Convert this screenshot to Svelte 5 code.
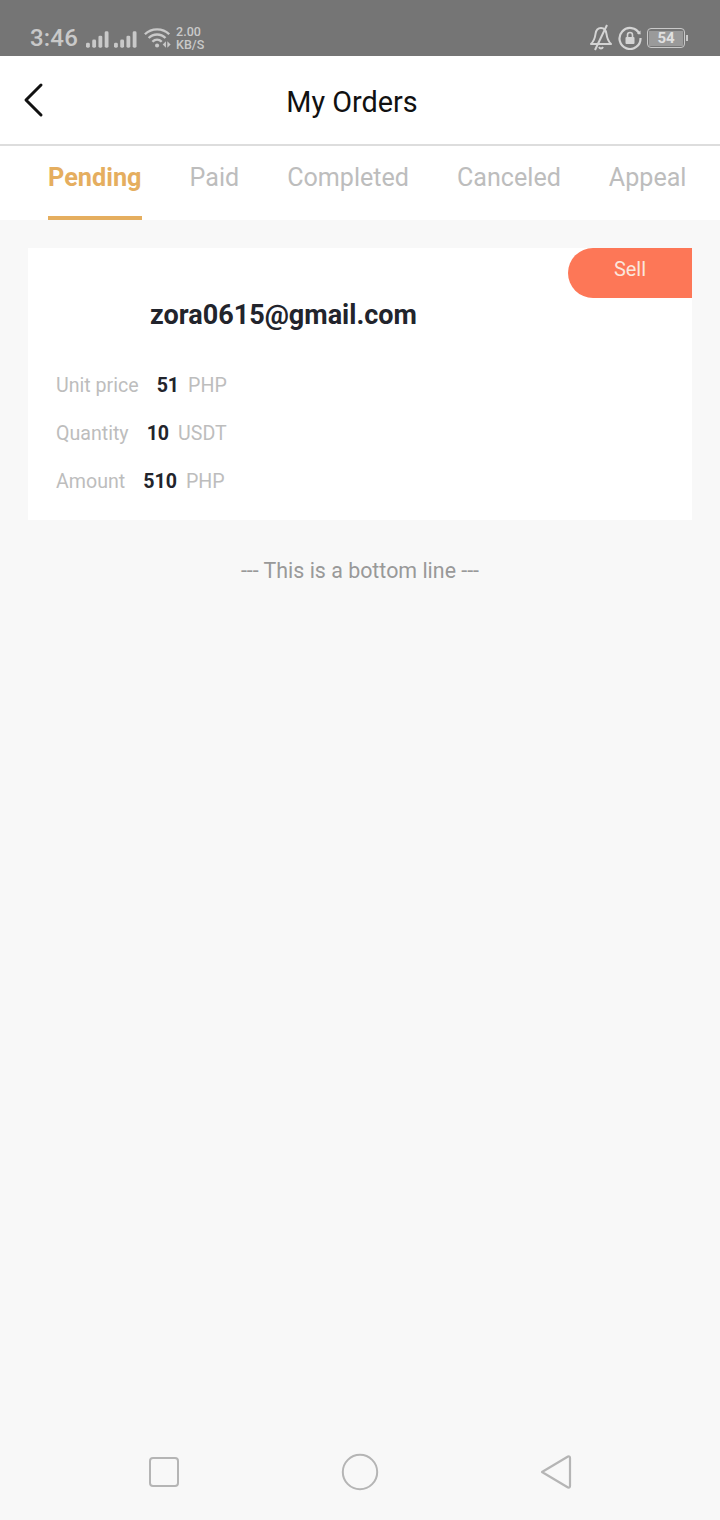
<script>
  const tabs = ['Pending', 'Paid', 'Completed', 'Canceled', 'Appeal'];
  let active = $state('Pending');

  const rows = [
    { label: 'Unit price', value: '51', unit: 'PHP' },
    { label: 'Quantity', value: '10', unit: 'USDT' },
    { label: 'Amount', value: '510', unit: 'PHP' }
  ];
</script>

<div class="page">
  <div class="status">
    <div class="status-left">
      <span class="time">3:46</span>
      <svg class="signal" width="23" height="18" viewBox="0 0 24 18" fill="#c9c9c9">
        <rect x="0" y="13" width="4" height="5" rx="1.5" />
        <rect x="6.5" y="9.5" width="4" height="8.5" rx="1.5" />
        <rect x="13" y="5.5" width="4" height="12.5" rx="1.5" />
        <rect x="19.5" y="1" width="4" height="17" rx="1.5" />
      </svg>
      <svg class="signal" width="23" height="18" viewBox="0 0 24 18" fill="#c9c9c9">
        <rect x="0" y="13" width="4" height="5" rx="1.5" />
        <rect x="6.5" y="9.5" width="4" height="8.5" rx="1.5" />
        <rect x="13" y="5.5" width="4" height="12.5" rx="1.5" />
        <rect x="19.5" y="1" width="4" height="17" rx="1.5" />
      </svg>
      <svg class="wifi" width="28" height="24" viewBox="0 0 30 24" fill="none" stroke="#c9c9c9" stroke-width="2.6">
        <path d="M1 8 C8 1 20 1 27 8" />
        <path d="M5 12 C10 7 18 7 23 12" />
        <path d="M9 16 C12 13 16 13 19 16" />
        <circle cx="14" cy="20" r="2.2" fill="#c9c9c9" stroke="none" />
        <path d="M20 19 L23.5 15.5 V22.5 Z" fill="#c9c9c9" stroke="none" />
        <path d="M25 15.5 L28.5 19 L25 22.5 Z" fill="#c9c9c9" stroke="none" />
      </svg>
      <div class="speed"><span>2.00</span><span>KB/S</span></div>
    </div>
    <div class="status-right">
      <svg width="24" height="28" viewBox="0 0 24 28" fill="none" stroke="#d4d4d4" stroke-width="2" stroke-linejoin="round">
        <path d="M2 20 C5 17 6 14 6.5 10 C7 6 9 4 12 4 C15 4 17 6 17.5 10 C18 14 19 17 22 20 Z" />
        <path d="M10 23 C11 25 13 25 14 23" />
        <path d="M18 1 L6 26" />
      </svg>
      <svg width="24" height="24" viewBox="0 0 24 24" fill="none" stroke="#d4d4d4" stroke-width="2.2">
        <path d="M21.5 8 A10.5 10.5 0 1 0 22.5 12" />
        <path d="M19 7.5 L22.5 8.5 L22.5 4.5 Z" fill="#d4d4d4" stroke="none" />
        <rect x="7.5" y="11" width="9" height="7" rx="1" fill="#d4d4d4" stroke="none" />
        <path d="M9.5 11 V9 A2.5 2.5 0 0 1 14.5 9 V11" stroke-width="1.6" />
      </svg>
      <div class="battery"><span class="level">54</span></div>
      <span class="nub"></span>
    </div>
  </div>

  <header class="head">
    <button class="back" type="button" aria-label="Back">
      <svg width="22" height="36" viewBox="0 0 22 36" fill="none" stroke="#111" stroke-width="3" stroke-linecap="round" stroke-linejoin="round">
        <path d="M19 3 L4 18 L19 33" />
      </svg>
    </button>
    <h1>My Orders</h1>
  </header>

  <nav class="tabs">
    {#each tabs as tab (tab)}
      <button type="button" class="tab" class:on={active === tab} onclick={() => (active = tab)}>{tab}</button>
    {/each}
  </nav>

  <main class="list">
    <section class="card">
      <div class="badge">Sell</div>
      <div class="email">zora0615@gmail.com</div>
      <div class="rows">
        {#each rows as row (row.label)}
          <div class="row">
            <span class="label">{row.label}</span>
            <span class="value">{row.value}</span>
            <span class="unit">{row.unit}</span>
          </div>
        {/each}
      </div>
    </section>
    <p class="bottom">--- This is a bottom line ---</p>
  </main>

  <div class="softkeys">
    <svg width="32" height="32" viewBox="0 0 32 32" fill="none" stroke="#b5b5b5" stroke-width="2">
      <rect x="2" y="2" width="28" height="28" rx="3" />
    </svg>
    <svg width="38" height="38" viewBox="0 0 38 38" fill="none" stroke="#b5b5b5" stroke-width="2">
      <circle cx="19" cy="19" r="17.2" />
    </svg>
    <svg width="32" height="36" viewBox="0 0 32 36" fill="none" stroke="#b5b5b5" stroke-width="2.2" stroke-linejoin="round">
      <path d="M2 18 L28 2.5 Q30 2 30 4 V32 Q30 34 28 33.5 Z" />
    </svg>
  </div>
</div>

<style>
  :global(body) {
    margin: 0;
    background: #f8f8f8;
  }

  .page {
    display: flex;
    flex-direction: column;
    height: 1520px;
    font-family: Roboto, "Liberation Sans", sans-serif;
    background: #f8f8f8;
  }

  .status {
    display: flex;
    align-items: flex-end;
    justify-content: space-between;
    height: 56px;
    box-sizing: border-box;
    padding: 0 32px 0 30px;
    background: #757575;
    color: #c9c9c9;
  }

  .status-left,
  .status-right {
    display: flex;
    align-items: center;
    height: 36px;
  }

  .status-right {
    gap: 5px;
  }

  .time {
    font-size: 24px;
    font-weight: 500;
    letter-spacing: 0.2px;
    margin-right: 8px;
  }

  .signal {
    margin: 2px 5px 0 0;
  }

  .wifi {
    margin: 0 0 0 2px;
  }

  .speed {
    display: flex;
    flex-direction: column;
    margin-left: 4px;
    font-size: 12.5px;
    font-weight: 500;
    line-height: 13px;
  }

  .battery {
    display: flex;
    align-items: center;
    justify-content: center;
    width: 38px;
    height: 20px;
    box-sizing: border-box;
    border: 1.5px solid #c9c9c9;
    border-radius: 4px;
    padding: 1px;
  }

  .level {
    display: block;
    width: 100%;
    text-align: center;
    font-size: 15px;
    font-weight: 700;
    line-height: 15px;
    color: #e0e0e0;
    background: #9a9a9a;
  }

  .nub {
    width: 2px;
    height: 6px;
    margin-left: -4px;
    background: #c9c9c9;
  }

  .head {
    position: relative;
    height: 88px;
    background: #fff;
    border-bottom: 2px solid #ddd;
  }

  .back {
    position: absolute;
    left: 22px;
    top: 26px;
    padding: 0;
    border: 0;
    background: none;
  }

  h1 {
    margin: 0;
    padding-right: 16px;
    text-align: center;
    font-size: 28.8px;
    font-weight: 400;
    line-height: 92px;
    color: #111;
  }

  .tabs {
    display: flex;
    gap: 48px;
    height: 74px;
    padding-left: 48px;
    background: #fff;
  }

  .tab {
    height: 74px;
    box-sizing: border-box;
    padding: 0 0 8px;
    border: 0;
    border-bottom: 4px solid transparent;
    background: none;
    font: inherit;
    font-size: 25.1px;
    color: #bdbdbd;
  }

  .tab.on {
    font-weight: 700;
    font-size: 25.3px;
    color: #e5ae5f;
    border-bottom-color: #e5ae5f;
  }

  .list {
    display: flex;
    flex-direction: column;
    flex: 1;
    padding: 28px 28px 0;
  }

  .card {
    position: relative;
    height: 272px;
    box-sizing: border-box;
    padding: 49px 28px 0;
    background: #fff;
  }

  .badge {
    position: absolute;
    top: 0;
    right: 0;
    width: 124px;
    height: 50px;
    border-radius: 25px 0 0 25px;
    background: #fd7757;
    color: #fbe6dc;
    font-size: 20px;
    line-height: 42px;
    text-align: center;
  }

  .email {
    padding-left: 94px;
    font-size: 27px;
    font-weight: 700;
    line-height: 36px;
    color: #22242c;
  }

  .rows {
    display: flex;
    flex-direction: column;
    gap: 16px;
    margin-top: 36px;
  }

  .row {
    display: flex;
    height: 32px;
    align-items: center;
    font-size: 19.6px;
  }

  .label {
    margin-right: 18px;
    color: #bdbdbd;
  }

  .value {
    margin-right: 9px;
    font-weight: 700;
    color: #22242c;
  }

  .unit {
    color: #bdbdbd;
  }

  .bottom {
    margin: 36px 0 0;
    text-align: center;
    font-size: 21.4px;
    line-height: 30px;
    color: #999;
  }

  .softkeys {
    display: flex;
    align-items: center;
    justify-content: space-between;
    height: 48px;
    padding: 0 148px 24px;
  }
</style>
